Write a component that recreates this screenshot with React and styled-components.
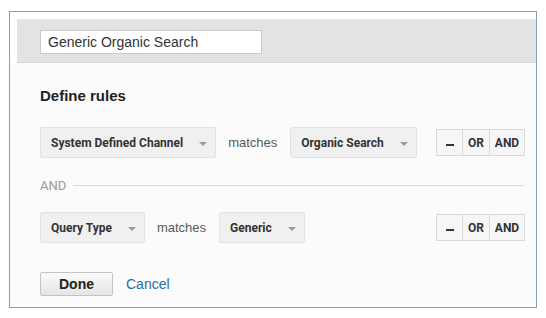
import { styled, createGlobalStyle } from "styled-components";

const GlobalStyle = createGlobalStyle`
  html, body {
    margin: 0;
    padding: 0;
    background: #ffffff;
  }
  body {
    font-family: "Liberation Sans", Arial, sans-serif;
  }
`;

const Frame = styled.div`
  margin: 11px 0 0 9px;
  width: 526px;
  height: 295px;
  border: 1px solid #7ea2b4;
  background: #fbfbfb;
  display: flex;
  flex-direction: column;
`;

const TopStrip = styled.div`
  background: #ffffff;
  padding: 7px 0 0 7px;
`;

const Header = styled.div`
  height: 44px;
  background: #e3e3e3;
  border-bottom: 1px solid #d6d6d6;
  padding: 11px 0 0 23px;
  box-sizing: border-box;
`;

const NameInput = styled.input`
  width: 222px;
  height: 24px;
  box-sizing: border-box;
  border: 1px solid #c9c9c9;
  background: #ffffff;
  padding: 0 7px;
  font-family: "Liberation Sans", Arial, sans-serif;
  font-size: 14px;
  color: #333;
  outline: none;
`;

const Body = styled.div`
  padding: 24px 11px 0 30px;
  display: flex;
  flex-direction: column;
`;

const Title = styled.div`
  font-size: 15px;
  line-height: 18px;
  font-weight: bold;
  color: #222;
`;

const Row = styled.div`
  display: flex;
  align-items: center;
  margin-top: ${(p) => p.$top}px;
`;

const Dropdown = styled.div`
  height: 31px;
  box-sizing: border-box;
  display: flex;
  align-items: center;
  padding: 0 8px 0 10px;
  background: #f0f0f0;
  border: 1px solid #e2e2e2;
  border-radius: 2px;
  font-family: Roboto, "Liberation Sans", sans-serif;
  font-size: 12px;
  font-weight: bold;
  color: #333;
`;

const Arrow = styled.span`
  width: 0;
  height: 0;
  margin-left: ${(p) => p.$gap}px;
  border-left: 4px solid transparent;
  border-right: 4px solid transparent;
  border-top: 4px solid #9a9a9a;
  margin-top: 2px;
`;

const Matches = styled.span`
  margin: 0 13px 0 12px;
  font-family: "Liberation Sans", Arial, sans-serif;
  font-size: 13px;
  color: #5a5a5a;
`;

const ButtonGroup = styled.div`
  margin-left: auto;
  display: flex;
  height: 27px;
  border: 1px solid #d9d9d9;
  box-sizing: border-box;
  background: #f6f6f6;
`;

const Seg = styled.div`
  width: ${(p) => p.$w}px;
  display: flex;
  align-items: center;
  justify-content: center;
  font-family: Roboto, "Liberation Sans", sans-serif;
  font-size: 12px;
  font-weight: bold;
  color: #333;
  & + & {
    border-left: 1px solid #d9d9d9;
  }
`;

const Minus = styled.span`
  width: 8px;
  height: 2px;
  margin-top: 5px;
  background: #333;
`;

const Separator = styled.div`
  display: flex;
  align-items: center;
  height: 16px;
  margin-top: 19px;
  font-family: Roboto, "Liberation Sans", sans-serif;
  font-size: 13px;
  color: #9a9a9a;
  &::after {
    content: "";
    flex: 1;
    height: 1px;
    margin-left: 7px;
    margin-right: 1px;
    background: #dcdcdc;
  }
`;

const Actions = styled.div`
  display: flex;
  align-items: center;
  margin-top: 29px;
`;

const DoneButton = styled.button`
  width: 73px;
  height: 24px;
  border: 1px solid #c3c3c3;
  border-radius: 2px;
  background: linear-gradient(#fafafa, #e5e5e5);
  font-family: "Liberation Sans", Arial, sans-serif;
  font-size: 14px;
  font-weight: bold;
  color: #222;
  padding: 0;
`;

const CancelLink = styled.a`
  margin-left: 13px;
  font-size: 14px;
  color: #2c6e9e;
  text-decoration: none;
`;

function Rule({ field, value, top }) {
  return (
    <Row $top={top}>
      <Dropdown>
        {field}
        <Arrow $gap={16} />
      </Dropdown>
      <Matches>matches</Matches>
      <Dropdown>
        {value}
        <Arrow $gap={16} />
      </Dropdown>
      <ButtonGroup>
        <Seg $w={25}>
          <Minus />
        </Seg>
        <Seg $w={26}>OR</Seg>
        <Seg $w={34}>AND</Seg>
      </ButtonGroup>
    </Row>
  );
}

export default function App() {
  return (
    <>
      <GlobalStyle />
      <Frame>
        <TopStrip>
          <Header>
            <NameInput defaultValue="Generic Organic Search" />
          </Header>
        </TopStrip>
        <Body>
          <Title>Define rules</Title>
          <Rule top={22} field="System Defined Channel" value="Organic Search" />
          <Separator>AND</Separator>
          <Rule top={19} field="Query Type" value="Generic" />
          <Actions>
            <DoneButton>Done</DoneButton>
            <CancelLink href="#">Cancel</CancelLink>
          </Actions>
        </Body>
      </Frame>
    </>
  );
}
